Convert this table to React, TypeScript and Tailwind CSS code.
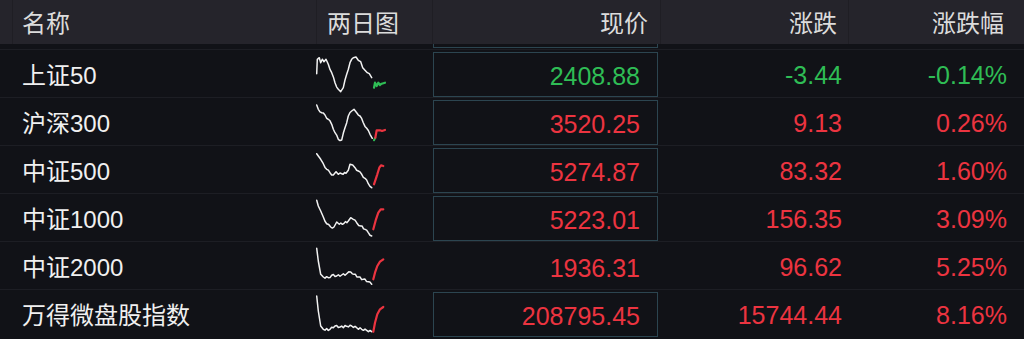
import React from "react";

type Row = {
  name: string;
  price: string;
  chg: string;
  pct: string;
  up: boolean;
  box: boolean;
  white: number[][];
  tail: number[][];
  greenStub?: number[][];
};

const RED = "#ec3440";
const GREEN = "#2fbd55";

const rows: Row[] = [
  {
    name: "上证50",
    price: "2408.88",
    chg: "-3.44",
    pct: "-0.14%",
    up: false,
    box: true,
    white: [[316.7,23.7],[317.3,9.3],[319.3,7.7],[320.7,12.7],[322.3,9.3],[324,11.7],[326,9.3],[328.3,14.3],[331.7,22.7],[335,32.7],[338.3,39.3],[340.7,41.7],[343.3,37.7],[346.7,24.3],[350,12.7],[353.3,7.7],[356,7],[358.3,10.3],[360.7,11.7],[362.7,17.7],[365,20.3],[367.3,22.7],[369.3,23.7],[371.7,27.7]],
    tail: [[374,37.7],[375,32.7],[376.7,36],[378.3,32.7],[380,35],[381.7,33.7],[385,32.7]],
  },
  {
    name: "沪深300",
    price: "3520.25",
    chg: "9.13",
    pct: "0.26%",
    up: true,
    box: true,
    white: [[316.7,7],[318.3,11.3],[321.7,14.7],[325,17],[328.3,21.3],[331.7,26.3],[335,34.7],[338.3,41.3],[341.7,42],[345,29.7],[348.3,18],[351.7,13],[354,11.3],[356.7,14.7],[360,18],[363.3,24.7],[366.7,30.3],[370,36.3],[372.3,40.3]],
    tail: [[375.3,39.7],[376.7,32.3],[380,32.3],[382,33],[385,32]],
    greenStub: [[374,42.3],[375.3,39.7]],
  },
  {
    name: "中证500",
    price: "5274.87",
    chg: "83.32",
    pct: "1.60%",
    up: true,
    box: true,
    white: [[316.7,7.7],[318.3,10],[320.7,13.3],[323.3,17.7],[326.7,23.3],[330,26.7],[333.3,29],[336,25.7],[338.3,28.3],[341.7,27.7],[346,27.3],[348.3,24.3],[350,18.3],[352.7,19],[355,21.7],[358.3,25],[361.7,28.3],[365,32.3],[368.3,37.7],[371.7,41.7]],
    tail: [[374,38.3],[377.3,28.3],[379.3,21.7],[381,19.3],[383.3,20]],
  },
  {
    name: "中证1000",
    price: "5223.01",
    chg: "156.35",
    pct: "3.09%",
    up: true,
    box: true,
    white: [[316.7,6.3],[318.3,12],[320.7,17],[323.3,23],[326.7,29.7],[330.7,33],[334,33],[336.7,28],[339.3,30.3],[344,29.3],[348.3,27],[350.7,23.7],[353.3,25.3],[356.7,28.7],[360.7,32],[365,35.3],[368.3,38.7],[371.7,42]],
    tail: [[373.3,35.3],[376,25.3],[378.3,18.7],[380.7,15.3],[383.3,15.3]],
  },
  {
    name: "中证2000",
    price: "1936.31",
    chg: "96.62",
    pct: "5.25%",
    up: true,
    box: false,
    white: [[316.7,6.3],[318.3,19],[320.7,32.3],[323.3,35],[328.3,35.7],[331.7,33.3],[336.7,34],[341.7,33],[346.7,31.7],[350.7,30],[354,32.3],[358.3,35],[363.3,37.3],[368.3,39.7],[371.7,42.3]],
    tail: [[373.3,37.3],[375,30.7],[377.3,24],[380,19.7],[383.3,17.3]],
  },
  {
    name: "万得微盘股指数",
    price: "208795.45",
    chg: "15744.44",
    pct: "8.16%",
    up: true,
    box: true,
    white: [[316.7,6],[318.3,21],[320.7,36],[323.3,39.3],[330,39.3],[335,36],[340,37],[346.7,36.3],[351.7,36],[356.7,37.7],[361.7,39.3],[366.7,40.3],[371.7,41.7]],
    tail: [[373.3,41.7],[375,32.7],[377.3,24.3],[380,19.3],[383.3,17]],
  },
];

// insert small deterministic jitter between points so the line looks like tick data
function jitter(p: number[][]): number[][] {
  const out: number[][] = [];
  const offs = [0.9, -0.8, 1.1, -1.0, 0.7, -0.9];
  let k = 0;
  for (let i = 0; i < p.length; i++) {
    out.push(p[i]);
    if (i < p.length - 1) {
      const [x1, y1] = p[i];
      const [x2, y2] = p[i + 1];
      const steps = Math.max(1, Math.floor((x2 - x1) / 1.4));
      for (let s = 1; s < steps; s++) {
        const t = s / steps;
        out.push([x1 + (x2 - x1) * t, y1 + (y2 - y1) * t + offs[k++ % offs.length]]);
      }
    }
  }
  return out;
}

const pts = (p: number[][]) => p.map((q) => q.map((v) => v.toFixed(2)).join(",")).join(" ");

function Spark({ r }: { r: Row }) {
  const c = r.up ? RED : GREEN;
  return (
    <svg width="116" height="47" viewBox="316 0 116 47" className="block">
      <polyline points={pts(jitter(r.white))} fill="none" stroke="#f2f2f2" strokeWidth="1.5" strokeLinejoin="round" strokeLinecap="round" />
      {r.greenStub && (
        <polyline points={pts(r.greenStub)} fill="none" stroke={GREEN} strokeWidth="2" strokeLinecap="round" />
      )}
      <polyline points={pts(r.tail)} fill="none" stroke={c} strokeWidth="2.2" strokeLinejoin="round" strokeLinecap="round" />
    </svg>
  );
}

const numFont = { fontFamily: '"Liberation Sans", Arial, sans-serif' };
const cjkFont = { fontFamily: '"Liberation Sans", "Noto Sans CJK SC", sans-serif' };

export default function App() {
  return (
    <div className="w-[1024px] h-[339px] overflow-hidden bg-[#111217] text-[#e8e8e8]">
      <div
        className="h-[44px] bg-[#25242b] grid grid-cols-[12px_304px_116px_228px_188px_176px] text-[24px] leading-none text-[#dcdcdc]"
        style={{ fontFamily: '"Noto Sans CJK SC", sans-serif' }}
      >
        <div />
        <div className="border-l border-[#1f1e24] flex items-center pl-[9px]">名称</div>
        <div className="border-l border-[#1f1e24] flex items-center pl-[10px]">两日图</div>
        <div className="border-l border-[#1f1e24] flex items-center justify-end pr-[12px]">现价</div>
        <div className="border-l border-[#1f1e24] flex items-center justify-end pr-[11px]">涨跌</div>
        <div className="border-l border-[#1f1e24] flex items-center justify-end pr-[20px]">涨跌幅</div>
      </div>
      <div className="h-[5px] grid grid-cols-[432px_228px]">
        <div />
        <div className="pl-[1px] pr-[2px]">
          <div className="h-[4px] border-x border-b border-[#2c4550]" />
        </div>
      </div>
      {rows.map((r) => {
        const color = r.up ? "text-[#ec3440]" : "text-[#2fbd55]";
        return (
          <div
            key={r.name}
            className="h-[48px] border-t border-[#1d1e24] grid grid-cols-[316px_116px_228px_188px_176px] text-[25px] leading-none"
          >
            <div className="flex items-center pl-[22px] pt-[4px] text-[24px] text-[#f0f0f0]" style={cjkFont}>
              {r.name}
            </div>
            <div className="flex items-start">
              <Spark r={r} />
            </div>
            <div className="pl-[1px] pr-[2px] pt-[2px]">
              <div
                className={`h-[45px] border ${r.box ? "border-[#2c4550]" : "border-transparent"} flex items-center justify-end pr-[17px] pt-[3px] ${color}`}
                style={numFont}
              >
                {r.price}
              </div>
            </div>
            <div className={`flex items-center justify-end pr-[6px] pt-[4px] ${color}`} style={numFont}>
              {r.chg}
            </div>
            <div className={`flex items-center justify-end pr-[17px] pt-[4px] ${color}`} style={numFont}>
              {r.pct}
            </div>
          </div>
        );
      })}
    </div>
  );
}
